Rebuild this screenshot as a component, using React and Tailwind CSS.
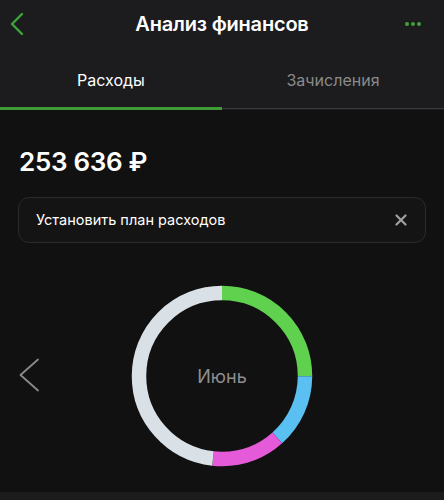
export default function App() {
  const r = 83
  const c = 2 * Math.PI * r
  const segments = [
    { color: '#5fd14f', from: 0, to: 90 },
    { color: '#5ac0f2', from: 90, to: 138 },
    { color: '#e45ad8', from: 138, to: 186 },
    { color: '#d9e0e6', from: 186, to: 360 },
  ]

  return (
    <div className="w-[444px] h-[500px] bg-[#111111] flex flex-col overflow-hidden" style={{ fontFamily: 'Inter, "Noto Sans", sans-serif' }}>
      <div className="bg-[#1c1c1e]">
        <div className="h-[48px] grid grid-cols-[1fr_auto_1fr] items-center px-[10px]">
          <svg width="14" height="24" viewBox="0 0 14 24" fill="none">
            <path d="M12 2L2 12l10 10" stroke="#3fa33a" strokeWidth="2.4" strokeLinecap="round" strokeLinejoin="round" />
          </svg>
          <div className="text-white text-[20px] font-semibold tracking-[-0.2px]">Анализ финансов</div>
          <div className="flex justify-end gap-[2px] pr-[13px]">
            <span className="w-[4px] h-[4px] rounded-full bg-[#3fa33a]" />
            <span className="w-[4px] h-[4px] rounded-full bg-[#3fa33a]" />
            <span className="w-[4px] h-[4px] rounded-full bg-[#3fa33a]" />
          </div>
        </div>
        <div className="h-[62px] flex">
          <div className="flex-1 flex items-center justify-center text-white text-[16px] pt-[4px] border-b-[3px] border-[#3f9b35]">Расходы</div>
          <div className="flex-1 flex items-center justify-center text-[#8a8a8a] text-[16px] pt-[4px] border-b border-[#3a3a3c] mb-[1px]">Зачисления</div>
        </div>
      </div>

      <div className="flex-1 flex flex-col px-[18px]">
        <div className="mt-[36px] text-white text-[26px] font-semibold leading-[32px] tracking-[-0.3px] pl-[1px]">253 636 ₽</div>
        <div className="mt-[19px] h-[46px] rounded-[11px] border border-[#2b2b2d] bg-[#141414] flex items-center justify-between pl-[17px] pr-[18px]">
          <span className="text-white text-[14.5px]">Установить план расходов</span>
          <svg width="12" height="12" viewBox="0 0 12 12">
            <path d="M1.5 1.5l9 9M10.5 1.5l-9 9" stroke="#a0a0a2" strokeWidth="2.2" strokeLinecap="round" />
          </svg>
        </div>

        <div className="relative mt-[42px] flex justify-center">
          <svg className="absolute left-0 top-[73px]" width="22" height="34" viewBox="0 0 22 34" fill="none">
            <path d="M20 1.5L2.5 17 20 32.5" stroke="#8a8a8c" strokeWidth="1.8" strokeLinecap="round" strokeLinejoin="round" />
          </svg>
          <div className="relative w-[182px] h-[182px]">
            <svg width="182" height="182" viewBox="0 0 182 182" className="-rotate-90">
              {segments.map((s) => (
                <circle
                  key={s.color}
                  cx="91"
                  cy="91"
                  r={r}
                  fill="none"
                  stroke={s.color}
                  strokeWidth="14.5"
                  strokeDasharray={`${((s.to - s.from) / 360) * c} ${c}`}
                  strokeDashoffset={-(s.from / 360) * c}
                />
              ))}
            </svg>
            <div className="absolute inset-0 flex items-center justify-center text-[#8e8e90] text-[18px]">Июнь</div>
          </div>
        </div>
      </div>

      <div className="h-[8px] bg-[#1c1c1c]" />
    </div>
  )
}
